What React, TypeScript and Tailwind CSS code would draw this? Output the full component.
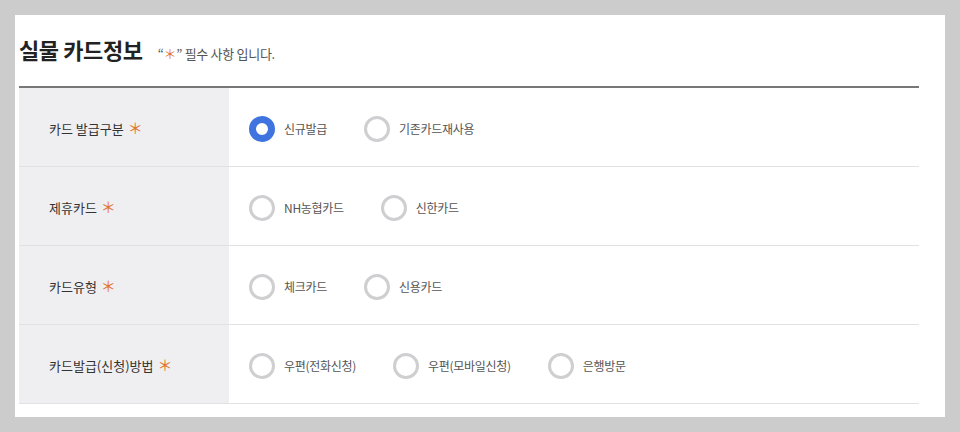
import React, { useState } from 'react';

interface Field {
    label: string;
    name: string;
    options: string[];
    selected?: number;
}

const fields: Field[] = [
    { label: '카드 발급구분', name: 'issue', options: ['신규발급', '기존카드재사용'], selected: 0 },
    { label: '제휴카드', name: 'partner', options: ['NH농협카드', '신한카드'] },
    { label: '카드유형', name: 'type', options: ['체크카드', '신용카드'] },
    { label: '카드발급(신청)방법', name: 'method', options: ['우편(전화신청)', '우편(모바일신청)', '은행방문'] },
];

const font = { fontFamily: '"Noto Sans CJK KR", "Noto Sans", sans-serif' };

function Star({ className }: { className?: string }) {
    return <span className={`text-[#e0762f] ${className ?? ''}`}>＊</span>;
}

function Radio({ checked, label, onClick }: { checked: boolean; label: string; onClick: () => void }) {
    return (
        <button type="button" onClick={onClick} className="flex items-center mr-[37px]">
            <span
                className={`w-[26px] h-[26px] rounded-full bg-white box-border ${checked ? 'border-[7px] border-[#3f74e0]' : 'border-[3px] border-[#cfcfd1]'
                    }`}
            />
            <span className="ml-[9px] text-[12px] tracking-[-0.3px] text-[#555]">{label}</span>
        </button>
    );
}

export default function App() {
    const [values, setValues] = useState<Record<string, number | undefined>>(
        Object.fromEntries(fields.map((f) => [f.name, f.selected]))
    );

    return (
        <div className="w-[960px] h-[432px] bg-[#cccccc] p-[15px]" style={font}>
            <div className="bg-white h-[402px] pl-[4px] pr-[26px]">
                {/* Heading */}
                <div className="flex items-baseline pt-[20px] pb-[22px] border-b-2 border-[#777]">
                    <h2 className="text-[22px] font-bold text-[#222] leading-[29px] tracking-[-0.4px]">실물 카드정보</h2>
                    <p className="ml-[15px] text-[13px] tracking-[-0.3px] text-[#555]">
                        “<Star className="text-[13px]" />” 필수 사항 입니다.
                    </p>
                </div>

                {/* Rows */}
                {fields.map((f) => (
                    <div key={f.name} className="flex h-[79px] border-b border-[#e2e2e4]">
                        <div className="w-[210px] bg-[#efeff1] flex items-center pl-[30px] pt-[3px] text-[13px] text-[#333]">
                            {f.label}
                            <Star className="ml-[4px] text-[15px]" />
                        </div>
                        <div className="flex items-center pl-[20px] pt-[3px]">
                            {f.options.map((opt, i) => (
                                <Radio
                                    key={opt}
                                    label={opt}
                                    checked={values[f.name] === i}
                                    onClick={() => setValues({ ...values, [f.name]: i })}
                                />
                            ))}
                        </div>
                    </div>
                ))}
            </div>
        </div>
    );
}
